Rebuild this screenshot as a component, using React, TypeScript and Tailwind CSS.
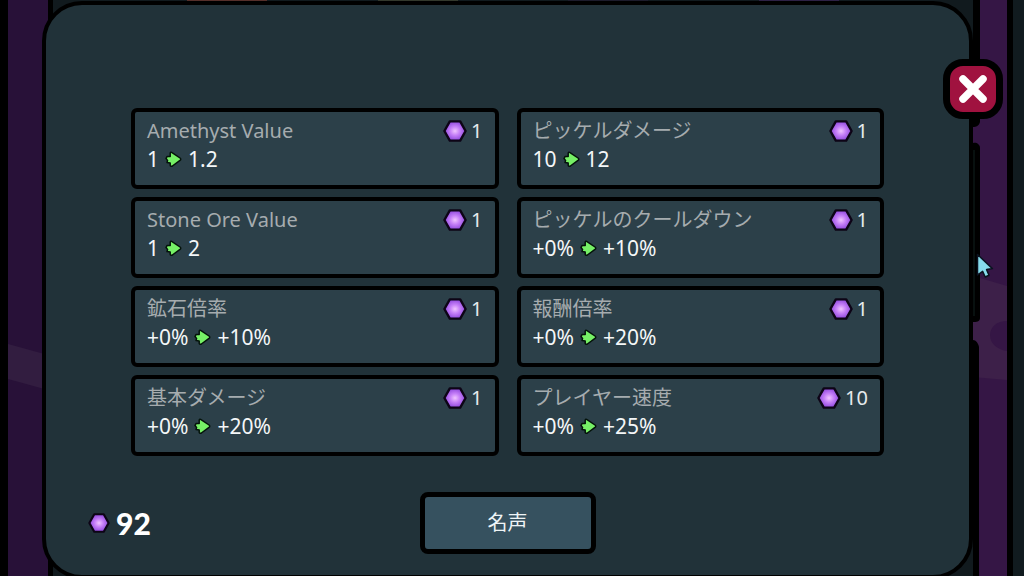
import React from 'react';

interface Upgrade {
  name: string;
  from: string;
  to: string;
  cost: number;
}

const upgrades: Upgrade[] = [
  { name: 'Amethyst Value', from: '1', to: '1.2', cost: 1 },
  { name: 'ピッケルダメージ', from: '10', to: '12', cost: 1 },
  { name: 'Stone Ore Value', from: '1', to: '2', cost: 1 },
  { name: 'ピッケルのクールダウン', from: '+0%', to: '+10%', cost: 1 },
  { name: '鉱石倍率', from: '+0%', to: '+10%', cost: 1 },
  { name: '報酬倍率', from: '+0%', to: '+20%', cost: 1 },
  { name: '基本ダメージ', from: '+0%', to: '+20%', cost: 1 },
  { name: 'プレイヤー速度', from: '+0%', to: '+25%', cost: 10 },
];

const GemIcon: React.FC<{ className?: string }> = ({ className }) => (
  <svg viewBox="0 0 24 22" className={className} aria-hidden="true">
    <defs>
      <radialGradient id="gem">
        <stop offset="0" stopColor="#f0c4ff" />
        <stop offset="0.45" stopColor="#c680f8" />
        <stop offset="1" stopColor="#8f48dc" />
      </radialGradient>
    </defs>
    <path d="M6.8 1.4H17.2L22.6 11L17.2 20.6H6.8L1.4 11Z" fill="url(#gem)" stroke="#0d0416" strokeWidth="2.4" strokeLinejoin="round" />
  </svg>
);

const ArrowIcon: React.FC = () => (
  <svg viewBox="0 0 17 17" className="w-[17px] h-[17px] shrink-0" aria-hidden="true">
    <path
      d="M5.2 2.2C5.4 1.2 6.2 1.1 7 1.6L15 7C16 7.8 16 8.6 15 9.4L7.4 15C6.4 15.6 5.2 15.2 5.2 14.2V12L2 11.6L2.6 9.4L1 7.6L2 5.6H5.2Z"
      fill="#76f066"
      stroke="#04120a"
      strokeWidth="1.5"
      strokeLinejoin="round"
    />
  </svg>
);

// The mine shaft walls that show on both sides of the panel
const Backdrop: React.FC = () => (
  <div className="absolute inset-0 flex bg-[#0f1719]" aria-hidden="true">
    <div className="w-2 bg-black" />
    <svg className="w-10 h-full" viewBox="0 0 40 576" preserveAspectRatio="none">
      <rect width="40" height="576" fill="#281138" />
      <path d="M0 344L40 355V390L0 379Z" fill="#321d40" />
    </svg>
    <div className="w-[5px] bg-black" />
    <div className="flex-1 flex justify-between px-[134px] bg-[#111a1e]">
      <div className="w-20 h-px bg-[#552f2a]" />
      <div className="w-20 h-px bg-[#33382c]" />
      <div className="w-20 h-px bg-[#1c1b2b]" />
      <div className="w-20 h-px bg-[#2d2145]" />
    </div>
    <svg className="w-[39px] h-full" viewBox="0 0 39 576" preserveAspectRatio="none">
      <rect width="39" height="576" fill="#351645" />
      <path d="M0 276L34 286V380L0 377Z" fill="#3d2049" />
      <path d="M34 321C24 321 17 327 17 335C17 344 25 350 34 351Z" fill="#351645" />
      <path d="M0 0H7V122C6 126 3 127 0 127Z" fill="#000" />
      <path d="M0 143C3 142 7 144 7 148V318C7 322 3 322 0 322Z" fill="#000" />
      <path d="M0 340C3 340 5 343 6 347V576H0Z" fill="#000" />
      <path d="M1 150V316" stroke="#08100f" strokeWidth="2" />
      <rect x="34" width="5" height="576" fill="#000" />
    </svg>
    <div className="w-px bg-black" />
    <div className="w-[11px] bg-[#111b1f]" />
  </div>
);

const UpgradeCard: React.FC<{ upgrade: Upgrade }> = ({ upgrade }) => (
  <li className="h-[81px] px-3 pt-[5px] rounded-md border-4 border-black bg-[#2c4049] text-[21px] leading-7">
    <div className="flex items-center justify-between">
      <h2 className="text-xl leading-7 text-[#a6acaf]">{upgrade.name}</h2>
      <div className="flex items-center gap-1 text-xl leading-7 text-[#e6ebed]">
        <GemIcon className="w-6 h-[22px]" />
        <span>{upgrade.cost}</span>
      </div>
    </div>
    <div className="flex items-center gap-1.5 text-[#f4f7f8]">
      <span>{upgrade.from}</span>
      <ArrowIcon />
      <span>{upgrade.to}</span>
    </div>
  </li>
);

const App: React.FC = () => {
  return (
    <div className="relative h-screen overflow-hidden font-['Noto_Sans','Noto_Sans_CJK_JP',sans-serif]">
      <Backdrop />

      <main className="relative flex flex-col min-h-[calc(100%+2px)] mt-px ml-[42px] mr-[51px] px-[85px] pt-[103px] rounded-[40px] border-4 border-black bg-[#213239]">
        <ul className="grid grid-cols-2 gap-x-[18px] gap-y-2">
          {upgrades.map((upgrade) => (
            <UpgradeCard key={upgrade.name} upgrade={upgrade} />
          ))}
        </ul>

        <footer className="grid grid-cols-[1fr_auto_1fr] items-center mt-9 -mx-[43px]">
          <div className="flex items-center gap-1.5 text-white">
            <GemIcon className="w-[22px] h-5" />
            <span className="font-['Lato',sans-serif] font-black text-[30px] leading-8">92</span>
          </div>
          <button type="button" className="w-44 h-[62px] rounded-lg border-[5px] border-black bg-[#36515f] text-xl text-[#eef4f6]">
            名声
          </button>
        </footer>

        <button
          type="button"
          aria-label="閉じる"
          className="absolute top-[54px] -right-[34px] flex items-center justify-center w-[60px] h-[60px] rounded-[20px] border-[7px] border-black bg-[#a0123f]"
        >
          <svg viewBox="0 0 28 28" className="w-7 h-7" aria-hidden="true">
            <path d="M4 4L24 24M24 4L4 24" stroke="#fff" strokeWidth="7.5" strokeLinecap="round" />
          </svg>
        </button>
      </main>

      <svg viewBox="0 0 18 26" className="absolute right-[30px] top-[253px] w-[18px] h-[26px]" aria-hidden="true">
        <path d="M1.5 1.5V22L6.6 18.4L9.2 24L13 22.2L10.6 16.6L16.4 15.6Z" fill="#86dcec" stroke="#0b1320" strokeWidth="1.5" strokeLinejoin="round" />
      </svg>
    </div>
  );
};

export default App;
